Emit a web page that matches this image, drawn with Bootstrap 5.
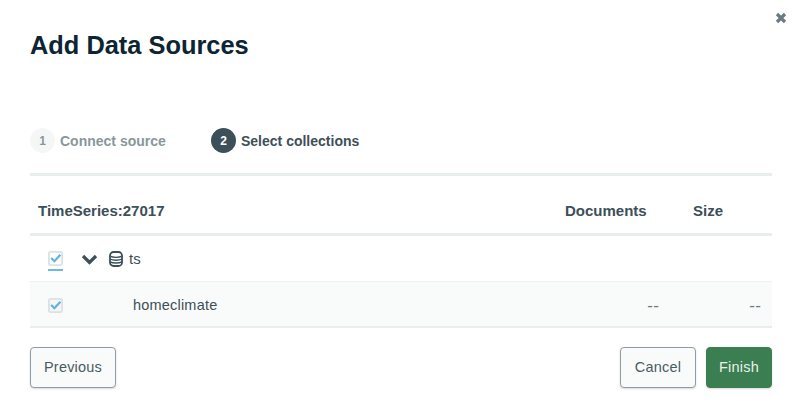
<!DOCTYPE html>
<html lang="en">
<head>
<meta charset="utf-8">
<title>Add Data Sources</title>
<link href="https://cdn.jsdelivr.net/npm/bootstrap@5.3.0/dist/css/bootstrap.min.css" rel="stylesheet">
<style>
html,body{height:414px;overflow:hidden;background:#fff}
body{font-family:"Liberation Sans",Arial,sans-serif;color:#3d4f58;-webkit-font-smoothing:antialiased}
.dlg{width:800px;height:414px;padding:0 28px 0 30px;position:relative}
.close-x{position:absolute;left:775px;top:12px;width:12px;height:12px;display:block}
.dlg-title{font-size:25.4px;font-weight:700;color:#0d2433;line-height:30px;margin:0;padding-top:30px;height:87px}
.stepper{height:89px;padding-top:41px;border-bottom:3px solid #e7eeec;margin-bottom:0;align-items:flex-start}
.step-item{display:flex;align-items:center;font-size:14px;font-weight:700;height:25px;padding-top:1px}
.step-num{width:25px;height:25px;margin-top:-1px;border-radius:50%;display:flex;align-items:center;justify-content:center;font-size:12px;font-weight:700;margin-right:5px}
.step-off{color:#89979b;width:181px}
.step-off .step-num{background:#f5f7f7;color:#89979b}
.step-on{color:#3d4f58}
.step-on .step-num{background:#3d4f58;color:#fff}
.grid-head{height:60px;border-bottom:3px solid #e7eeec;font-size:15px;font-weight:700;color:#3d4f58;padding-top:24px}
.col-name{flex:1 1 auto;padding-left:8px}
.col-docs{width:128px}
.col-size{width:79px}
.db-row{height:46px;padding-top:1px;border-bottom:1px solid #eef1f0}
.coll-row{height:46px;padding-top:3px;background:#f9fbfa;border-bottom:2px solid #e7eeec;font-size:14.5px;letter-spacing:.2px}
.chk-wrap{width:51px;padding-left:18px;display:block}
.chk-line{display:block;width:15px;border-bottom:2px solid #6cb8e6;padding-bottom:3px;margin-top:3px}
.chk-box{display:block;width:15px;height:15px}
.chev{margin-right:11px;display:block}
.db-ico{margin-right:6px;display:block}
.db-name{font-size:15px;color:#3d4f58}
.coll-name{flex:1 1 auto;padding-left:52px}
.dash-a{width:102px;color:#6b7a80;font-size:17px;text-align:right;padding-right:0}
.dash-b{width:113px;color:#6b7a80;font-size:17px;text-align:right;padding-right:11px}
.foot{margin-top:19px}
.act{font-size:14.5px;height:41px;padding:0 14px;border-radius:4px;letter-spacing:.2px;box-shadow:0 1px 2px rgba(0,0,0,.15)}
.act-ghost{background:#f9fbfa;border:1px solid #8f9da3;color:#4b5b63}
.act-ghost:hover{background:#f9fbfa;border-color:#8f9da3;color:#4b5b63}
.act-go{background:#3b7e51;border:1px solid #3b7e51;color:#e8f1ea;width:66px;padding:0;margin-left:10px}
.act-go:hover{background:#3b7e51;border-color:#3b7e51;color:#e8f1ea}
.act-cancel{width:76px;padding:0}
.act-prev{width:86px;padding:0}
</style>
</head>
<body>
<div class="dlg">
  <svg class="close-x" viewBox="0 0 12 12" aria-label="Close"><path d="M2 2l8 8M10 2l-8 8" stroke="#6a7a82" stroke-width="3.2" fill="none"/></svg>
  <h1 class="dlg-title">Add Data Sources</h1>
  <div class="stepper d-flex">
    <div class="step-item step-off"><span class="step-num">1</span>Connect source</div>
    <div class="step-item step-on"><span class="step-num">2</span>Select collections</div>
  </div>
  <div class="grid-head d-flex">
    <div class="col-name">TimeSeries:27017</div>
    <div class="col-docs">Documents</div>
    <div class="col-size">Size</div>
  </div>
  <div class="db-row d-flex align-items-center">
    <span class="chk-wrap"><span class="chk-line"><svg class="chk-box" viewBox="0 0 15 15"><rect x=".9" y=".9" width="13.2" height="13.2" rx="1.5" fill="#fff" stroke="#dde1e1" stroke-width="1.8"/><path d="M3.2 7l3.2 3.2 6-6.4" fill="none" stroke="#5cb3e6" stroke-width="2.2"/></svg></span></span>
    <svg class="chev" width="17" height="11" viewBox="0 0 17 11"><path d="M2 2l6.5 6.5L15 2" fill="none" stroke="#3d4f58" stroke-width="3.2"/></svg>
    <svg class="db-ico" width="14" height="16" viewBox="0 0 14 16"><rect x="1" y="1" width="12" height="14" rx="3.5" fill="none" stroke="#3d4f58" stroke-width="1.8"/><path d="M1 5.2c3 1.6 9 1.6 12 0M1 8c3 1.6 9 1.6 12 0M1 10.8c3 1.6 9 1.6 12 0" fill="none" stroke="#3d4f58" stroke-width="1.4"/></svg>
    <span class="db-name">ts</span>
  </div>
  <div class="coll-row d-flex align-items-center">
    <span class="chk-wrap"><svg class="chk-box" viewBox="0 0 15 15"><rect x=".9" y=".9" width="13.2" height="13.2" rx="1.5" fill="#f4f6f6" stroke="#dde1e1" stroke-width="1.8"/><path d="M3.2 7l3.2 3.2 6-6.4" fill="none" stroke="#5cb3e6" stroke-width="2.2"/></svg></span>
    <span class="coll-name">homeclimate</span>
    <span class="dash-a">--</span>
    <span class="dash-b">--</span>
  </div>
  <div class="foot d-flex">
    <button type="button" class="btn act act-ghost act-prev">Previous</button>
    <button type="button" class="btn act act-ghost act-cancel ms-auto">Cancel</button>
    <button type="button" class="btn act act-go">Finish</button>
  </div>
</div>
<script src="https://cdn.jsdelivr.net/npm/bootstrap@5.3.0/dist/js/bootstrap.bundle.min.js"></script>
</body>
</html>
